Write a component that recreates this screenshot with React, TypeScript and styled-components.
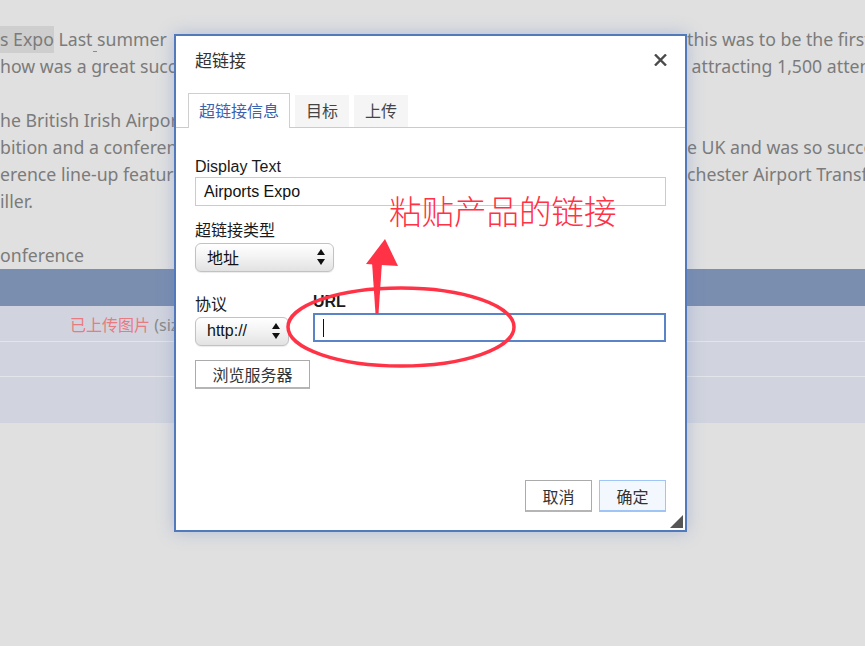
import React from 'react';
import styled, { createGlobalStyle } from 'styled-components';

const Global = createGlobalStyle`
  html, body { margin: 0; padding: 0; background: #e0e0e0; }
  body { font-family: "Liberation Sans", "Noto Sans CJK SC", sans-serif; }
`;

const Page = styled.div`
  position: relative;
  width: 865px;
  height: 646px;
  overflow: hidden;
  background: #e0e0e0;
`;

const Article = styled.div`
  padding-top: 26px;
  font-family: "Noto Sans", "Noto Sans CJK SC", sans-serif;
  font-size: 17.7px;
  color: #7b7b7b;
`;

const Line = styled.div`
  display: grid;
  grid-template-columns: 174px 513px 1fr;
  height: 27px;
  line-height: 27px;
  white-space: pre;
`;

const Cell = styled.span`
  overflow: hidden;
`;

const Mark = styled.span`
  background: #cecece;
  padding: 2px 0;
`;

const Caret = styled.span`
  border-bottom: 1px solid #6a8fd0;
`;

const Table = styled.div`
  display: flex;
  flex-direction: column;
`;

const HeadRow = styled.div`
  height: 37px;
  background: #7a8eb0;
`;

const Row = styled.div<{ $h: number; $sep?: boolean }>`
  box-sizing: border-box;
  height: ${(p) => p.$h}px;
  background: #d1d4de;
  border-top: ${(p) => (p.$sep ? '1px solid #e4e5ea' : 'none')};
  display: grid;
  grid-template-columns: 70px 104px;
  align-items: center;
  font-size: 16px;
  white-space: nowrap;
`;

const RowText = styled.div`
  grid-column: 2;
  overflow: hidden;
`;

const Uploaded = styled.span`
  color: #e77b80;
  font-family: "Noto Sans CJK SC", sans-serif;
`;

const Muted = styled.span`
  color: #8a8a8a;
  font-family: "Noto Sans", sans-serif;
`;

const Dialog = styled.div`
  position: absolute;
  left: 174px;
  top: 34px;
  width: 513px;
  height: 498px;
  box-sizing: border-box;
  background: #fff;
  border: 2px solid #5279bb;
  box-shadow: 0 0 16px rgba(90, 120, 185, 0.35);
  display: flex;
  flex-direction: column;
  color: #222;
`;

const TitleBar = styled.div`
  box-sizing: border-box;
  height: 50px;
  display: flex;
  align-items: center;
  justify-content: space-between;
  padding: 0 18px 4px 19px;
`;

const Title = styled.div`
  font-family: "Noto Sans CJK SC", sans-serif;
  font-size: 17px;
  color: #333;
`;

const Close = styled.div`
  display: flex;
  margin-top: 1px;
`;

const Tabs = styled.div`
  margin-top: 7px;
  display: flex;
  align-items: flex-end;
  gap: 5px;
  padding-left: 12px;
  border-bottom: 1px solid #cbcbcb;
  height: 34px;
`;

const Tab = styled.div<{ $active?: boolean }>`
  box-sizing: border-box;
  display: flex;
  align-items: center;
  justify-content: center;
  padding: 0 10px 3px;
  font-family: "Noto Sans CJK SC", sans-serif;
  font-size: 16px;
  height: ${(p) => (p.$active ? '35px' : '32px')};
  margin-bottom: ${(p) => (p.$active ? '-1px' : '0')};
  min-width: 54px;
  background: ${(p) => (p.$active ? '#fff' : '#f5f5f5')};
  border: ${(p) => (p.$active ? '1px solid #cfcfcf' : 'none')};
  border-bottom: none;
  color: ${(p) => (p.$active ? '#3765b0' : '#444')};
`;

const Body = styled.div`
  flex: 1;
  padding: 29px 19px 0;
  display: flex;
  flex-direction: column;
  align-items: flex-start;
`;

const Label = styled.div<{ $bold?: boolean; $gap?: number }>`
  font-size: 16px;
  line-height: 20px;
  height: 20px;
  margin-top: ${(p) => p.$gap ?? 0}px;
  font-weight: ${(p) => (p.$bold ? 700 : 400)};
  color: #1a1a1a;
`;

const TextBox = styled.div<{ $focus?: boolean; $gap?: number }>`
  box-sizing: border-box;
  align-self: stretch;
  height: 29px;
  margin-top: ${(p) => p.$gap ?? 0}px;
  border: ${(p) => (p.$focus ? '2px solid #5a84c8' : '1px solid #c7ccd3')};
  padding-left: ${(p) => (p.$focus ? '8px' : '8px')};
  display: flex;
  align-items: center;
  font-size: 16px;
  color: #111;
`;

const TextCaret = styled.span`
  width: 1px;
  height: 18px;
  background: #111;
`;

const Select = styled.div<{ $w: number }>`
  box-sizing: border-box;
  width: ${(p) => p.$w}px;
  height: 29px;
  margin-top: 2px;
  border: 1px solid #c2c2c2;
  border-radius: 6px;
  background: linear-gradient(#ffffff 0%, #f4f4f4 45%, #e2e2e2 100%);
  box-shadow: 0 1px 1px rgba(0, 0, 0, 0.08);
  display: flex;
  align-items: center;
  justify-content: space-between;
  padding: 0 8px 1px 11px;
  font-size: 16px;
  color: #111;
`;

const FieldRow = styled.div`
  margin-top: 20px;
  align-self: stretch;
  display: flex;
  align-items: flex-start;
`;

const LeftCol = styled.div`
  width: 94px;
  padding-top: 3px;
  display: flex;
  flex-direction: column;
`;

const RightCol = styled.div`
  flex: 1;
  margin-left: 24px;
  display: flex;
  flex-direction: column;
`;

const Button = styled.div<{ $primary?: boolean; $w: number; $h: number }>`
  box-sizing: border-box;
  width: ${(p) => p.$w}px;
  height: ${(p) => p.$h}px;
  display: flex;
  align-items: center;
  justify-content: center;
  font-family: "Noto Sans CJK SC", sans-serif;
  font-size: 16px;
  color: #333;
  background: ${(p) => (p.$primary ? '#f3f8ff' : '#fff')};
  border: 1px solid ${(p) => (p.$primary ? '#9fc5f6' : '#ababab')};
  border-bottom-width: 2px;
  border-bottom-color: ${(p) => (p.$primary ? '#9fc5f6' : '#b5b5b5')};
`;

const BrowseWrap = styled.div`
  margin-top: 14px;
`;

const Footer = styled.div`
  display: flex;
  justify-content: flex-end;
  gap: 7px;
  padding: 0 19px 18px;
`;

const Grip = styled.svg`
  position: absolute;
  right: 2px;
  bottom: 2px;
`;

const Overlay = styled.svg`
  position: absolute;
  left: 0;
  top: 0;
  pointer-events: none;
`;

const Note = styled.div`
  position: absolute;
  left: 389px;
  top: 193px;
  font-family: "Noto Sans CJK SC", sans-serif;
  font-weight: 300;
  font-size: 32.5px;
  line-height: 33px;
  color: #ff3246;
  white-space: nowrap;
`;

const Arrows = () => (
  <svg width="8" height="16" viewBox="0 0 8 16">
    <polygon points="4,0 8,6 0,6" fill="#111" />
    <polygon points="0,10 8,10 4,16" fill="#111" />
  </svg>
);

const lines: [React.ReactNode, string][] = [
  [
    <>
      <Mark>s Expo</Mark> Last<Caret> </Caret>summer
    </>,
    'this was to be the first',
  ],
  ['how was a great success', ' attracting 1,500 attendees'],
  ['', ''],
  ['he British Irish Airports', ''],
  ['bition and a conference', 'e UK and was so successful'],
  ['erence line-up featured', 'chester Airport Transformation'],
  ['iller.', ''],
  ['', ''],
  ['onference', ''],
];

export default function App() {
  return (
    <>
      <Global />
      <Page>
        <Article>
          {lines.map(([l, r], i) => (
            <Line key={i}>
              <Cell>{l}</Cell>
              <span />
              <Cell>{r}</Cell>
            </Line>
          ))}
        </Article>
        <Table>
          <HeadRow />
          <Row $h={35}>
            <RowText>
              <Uploaded>已上传图片</Uploaded>
              <Muted> (size)</Muted>
            </RowText>
          </Row>
          <Row $h={35} $sep />
          <Row $h={47} $sep />
        </Table>

        <Dialog>
          <TitleBar>
            <Title>超链接</Title>
            <Close>
              <svg width="13" height="12" viewBox="0 0 13 12">
                <path d="M1 0.5 L12 11.5 M12 0.5 L1 11.5" stroke="#4a4a4a" strokeWidth="2.4" />
              </svg>
            </Close>
          </TitleBar>
          <Tabs>
            <Tab $active>超链接信息</Tab>
            <Tab>目标</Tab>
            <Tab>上传</Tab>
          </Tabs>
          <Body>
            <Label>Display Text</Label>
            <TextBox>Airports Expo</TextBox>
            <Label $gap={15}>超链接类型</Label>
            <Select $w={139}>
              <span>地址</span>
              <Arrows />
            </Select>
            <FieldRow>
              <LeftCol>
                <Label>协议</Label>
                <Select $w={94}>
                  <span>http://</span>
                  <Arrows />
                </Select>
              </LeftCol>
              <RightCol>
                <Label $bold>URL</Label>
                <TextBox $focus $gap={1}>
                  <TextCaret />
                </TextBox>
              </RightCol>
            </FieldRow>
            <BrowseWrap>
              <Button $w={115} $h={29}>浏览服务器</Button>
            </BrowseWrap>
          </Body>
          <Footer>
            <Button $w={67} $h={32}>取消</Button>
            <Button $w={67} $h={32} $primary>确定</Button>
          </Footer>
          <Grip width="13" height="13" viewBox="0 0 13 13">
            <polygon points="13,0 13,13 0,13" fill="#555" />
          </Grip>
        </Dialog>

        <Overlay width="865" height="646" viewBox="0 0 865 646">
          <ellipse cx="401" cy="327" rx="113" ry="39" fill="none" stroke="#ff3246" strokeWidth="3.5" />
          <polygon points="385,239 366,264 398,266" fill="#ff3246" />
          <polygon points="372,262 382,262 378.5,314 375.5,314" fill="#ff3246" />
        </Overlay>
        <Note>粘贴产品的链接</Note>
      </Page>
    </>
  );
}
